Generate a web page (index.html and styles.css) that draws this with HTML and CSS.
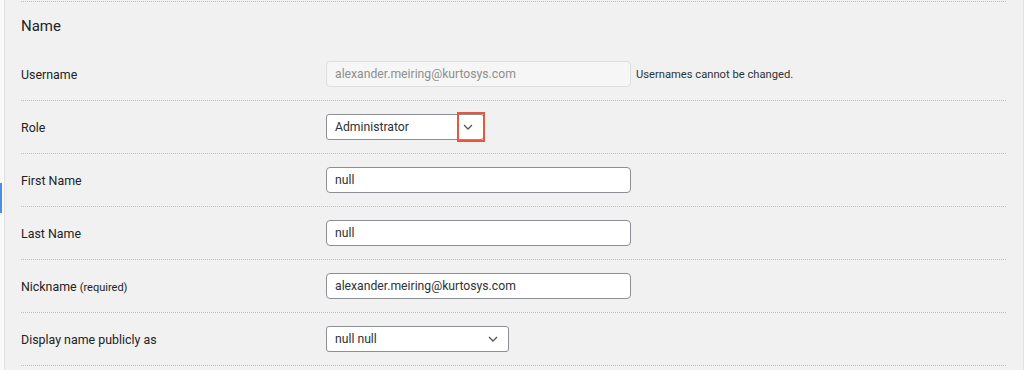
FILE: index.html
```html
<!DOCTYPE html>
<html lang="en">
<head>
    <meta charset="UTF-8">
    <meta name="viewport" content="width=device-width, initial-scale=1.0">
    <title>Edit User</title>
    <link rel="stylesheet" href="styles.css">
</head>
<body>
    <div class="sidebar-edge">
        <span class="active-mark"></span>
    </div>

    <div class="content">
        <h2>Name</h2>

        <div class="form-row first">
            <label for="user-login">Username</label>
            <div class="field">
                <input type="text" id="user-login" class="text-input" value="alexander.meiring@kurtosys.com" disabled>
                <span class="description">Usernames cannot be changed.</span>
            </div>
        </div>

        <div class="form-row">
            <label for="role">Role</label>
            <div class="field">
                <div class="select-wrap role">
                    <select id="role">
                        <option>Administrator</option>
                    </select>
                    <!-- highlight box from the annotated screenshot -->
                    <span class="highlight"></span>
                </div>
            </div>
        </div>

        <div class="form-row">
            <label for="first-name">First Name</label>
            <div class="field">
                <input type="text" id="first-name" class="text-input" value="null">
            </div>
        </div>

        <div class="form-row">
            <label for="last-name">Last Name</label>
            <div class="field">
                <input type="text" id="last-name" class="text-input" value="null">
            </div>
        </div>

        <div class="form-row">
            <label for="nickname">Nickname <small>(required)</small></label>
            <div class="field">
                <input type="text" id="nickname" class="text-input" value="alexander.meiring@kurtosys.com">
            </div>
        </div>

        <div class="form-row">
            <label for="display-name">Display name publicly as</label>
            <div class="field">
                <div class="select-wrap display">
                    <select id="display-name">
                        <option>null null</option>
                    </select>
                </div>
            </div>
        </div>

        <div class="form-row last"></div>
    </div>
</body>
</html>
```

FILE: styles.css
```css
/* Global Reset */
* {
    margin: 0;
    padding: 0;
    box-sizing: border-box;
}

body {
    font-family: Roboto, "Liberation Sans", Arial, sans-serif;
    background-color: #f1f1f1;
    color: #1d2327;
    display: flex;
    height: 370px;
    overflow: hidden;
    border-right: 1px solid #e2e2e2;
}

/* Left edge of the admin menu */
.sidebar-edge {
    width: 5px;
    flex-shrink: 0;
    background-color: #fafafa;
    border-right: 1px solid #e0e0e0;
    position: relative;
}

.active-mark {
    position: absolute;
    left: 0;
    top: 183px;
    width: 2px;
    height: 30px;
    background-color: #4a8ee6;
}

/* Main form area */
.content {
    flex: 1;
    padding: 0 17px 0 16px;
    border-top: 1px solid transparent;
}

.content::before {
    content: "";
    display: block;
    border-top: 1px dotted #bdbdbd;
}

h2 {
    font-size: 15px;
    font-weight: 400;
    line-height: 20px;
    margin: 14px 0 12px;
}

.form-row {
    display: flex;
    align-items: center;
    border-top: 1px dotted #bdbdbd;
    padding: 13px 0;
    min-height: 53px;
}

.form-row.first {
    border-top: none;
    padding: 13px 0 13px;
    min-height: 52px;
}

.form-row.last {
    min-height: 0;
    padding: 0;
}

label {
    width: 305px;
    flex-shrink: 0;
    font-size: 12.4px;
}

label small {
    font-size: 11px;
}

.field {
    display: flex;
    align-items: center;
}

.text-input {
    width: 305px;
    height: 26px;
    padding: 0 8px;
    font-family: inherit;
    font-size: 12.2px;
    color: #2c3338;
    background-color: #fff;
    border: 1px solid #8c8f94;
    border-radius: 4px;
}

.text-input:disabled {
    background-color: #f6f6f6;
    border-color: #dedede;
    color: #8e8e8e;
}

.description {
    font-size: 11.2px;
    margin-left: 5px;
    color: #2c3338;
}

/* Selects with chevron */
.select-wrap {
    position: relative;
    height: 26px;
}

.select-wrap select {
    appearance: none;
    -webkit-appearance: none;
    width: 100%;
    height: 26px;
    padding: 0 24px 0 8px;
    font-family: inherit;
    font-size: 12.2px;
    color: #2c3338;
    background-color: #fff;
    border: 1px solid #8c8f94;
    border-radius: 3px;
    background-image: url("data:image/svg+xml;utf8,<svg xmlns='http://www.w3.org/2000/svg' width='10' height='6' viewBox='0 0 10 6'><path d='M1 1l4 4 4-4' fill='none' stroke='%23555' stroke-width='1.3'/></svg>");
    background-repeat: no-repeat;
    background-position: right 10px center;
}

.select-wrap.role {
    width: 158px;
}

.select-wrap.display {
    width: 183px;
}

.highlight {
    position: absolute;
    right: -1px;
    top: -2px;
    width: 28px;
    height: 30px;
    border: 2px solid #e8573a;
}
```
